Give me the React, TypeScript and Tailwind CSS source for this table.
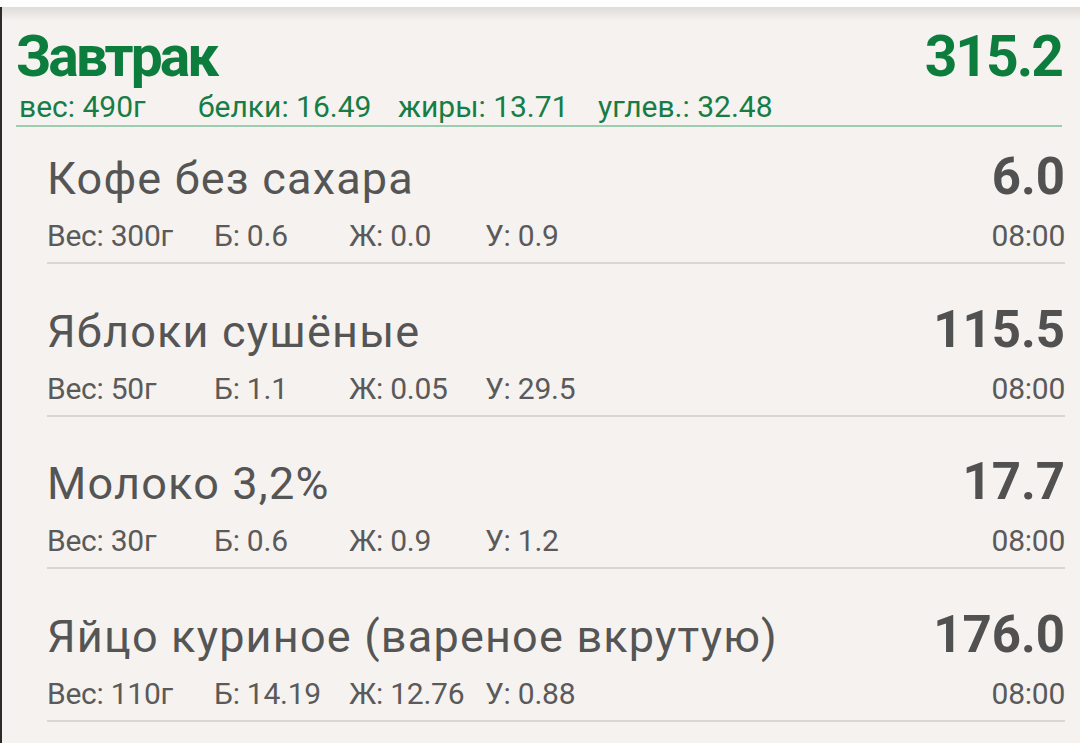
const meal = {
  title: 'Завтрак',
  kcal: '315.2',
  totals: ['вес: 490г', 'белки: 16.49', 'жиры: 13.71', 'углев.: 32.48'],
};

const items = [
  { name: 'Кофе без сахара', kcal: '6.0', w: 'Вес: 300г', p: 'Б: 0.6', f: 'Ж: 0.0', c: 'У: 0.9', time: '08:00' },
  { name: 'Яблоки сушёные', kcal: '115.5', w: 'Вес: 50г', p: 'Б: 1.1', f: 'Ж: 0.05', c: 'У: 29.5', time: '08:00' },
  { name: 'Молоко 3,2%', kcal: '17.7', w: 'Вес: 30г', p: 'Б: 0.6', f: 'Ж: 0.9', c: 'У: 1.2', time: '08:00' },
  { name: 'Яйцо куриное (вареное вкрутую)', kcal: '176.0', w: 'Вес: 110г', p: 'Б: 14.19', f: 'Ж: 12.76', c: 'У: 0.88', time: '08:00' },
];

export default function App() {
  return (
    <div className="w-[1080px] h-[743px] overflow-hidden bg-[#f6f2ef] font-['Roboto',sans-serif] flex flex-col">
      <div className="h-[7px] bg-[#fdfdfd] shrink-0" />
      <div className="flex-1 flex flex-col border-l-2 border-[#2b2b2b]">
        <div className="h-[14px] shrink-0 bg-gradient-to-b from-[#dedbd8] to-[#f6f2ef]" />

        {/* meal header */}
        <div className="pl-[14px] pr-[18px]">
          <div className="flex items-baseline justify-between h-[52px] mt-[10px] text-[#0c7d3d] font-bold">
            <span className="text-[57px] leading-[52px] tracking-[-3px]">{meal.title}</span>
            <span className="text-[57px] leading-[52px] tracking-[-2px]">{meal.kcal}</span>
          </div>
          <div className="flex h-[36px] mt-[6px] pl-[3px] text-[30px] leading-[36px] text-[#167d46]">
            <span className="w-[179px]">{meal.totals[0]}</span>
            <span className="w-[200px]">{meal.totals[1]}</span>
            <span className="w-[200px]">{meal.totals[2]}</span>
            <span>{meal.totals[3]}</span>
          </div>
          <div className="h-[2px] bg-[#9dcdb0]" />
        </div>

        {/* food list */}
        <div className="pl-[45px] pr-[15px]">
          {items.map((it) => (
            <div key={it.name} className="pt-[40.5px] first:pt-[25px]">
              <div className="flex items-baseline justify-between h-[50px]">
                <span className="text-[45px] leading-[50px] text-[#555555] tracking-[1.2px]">{it.name}</span>
                <span className="text-[51px] leading-[50px] font-bold text-[#515151]">{it.kcal}</span>
              </div>
              <div className="flex items-baseline h-[36px] mt-[16px] text-[30px] leading-[36px] text-[#5a5a5a] tracking-[-0.25px]">
                <span className="w-[167px]">{it.w}</span>
                <span className="w-[135px]">{it.p}</span>
                <span className="w-[136px]">{it.f}</span>
                <span className="flex-1">{it.c}</span>
                <span>{it.time}</span>
              </div>
              <div className="h-[2px] bg-[#d9d6d3] mt-[8px]" />
            </div>
          ))}
        </div>
      </div>
    </div>
  );
}
